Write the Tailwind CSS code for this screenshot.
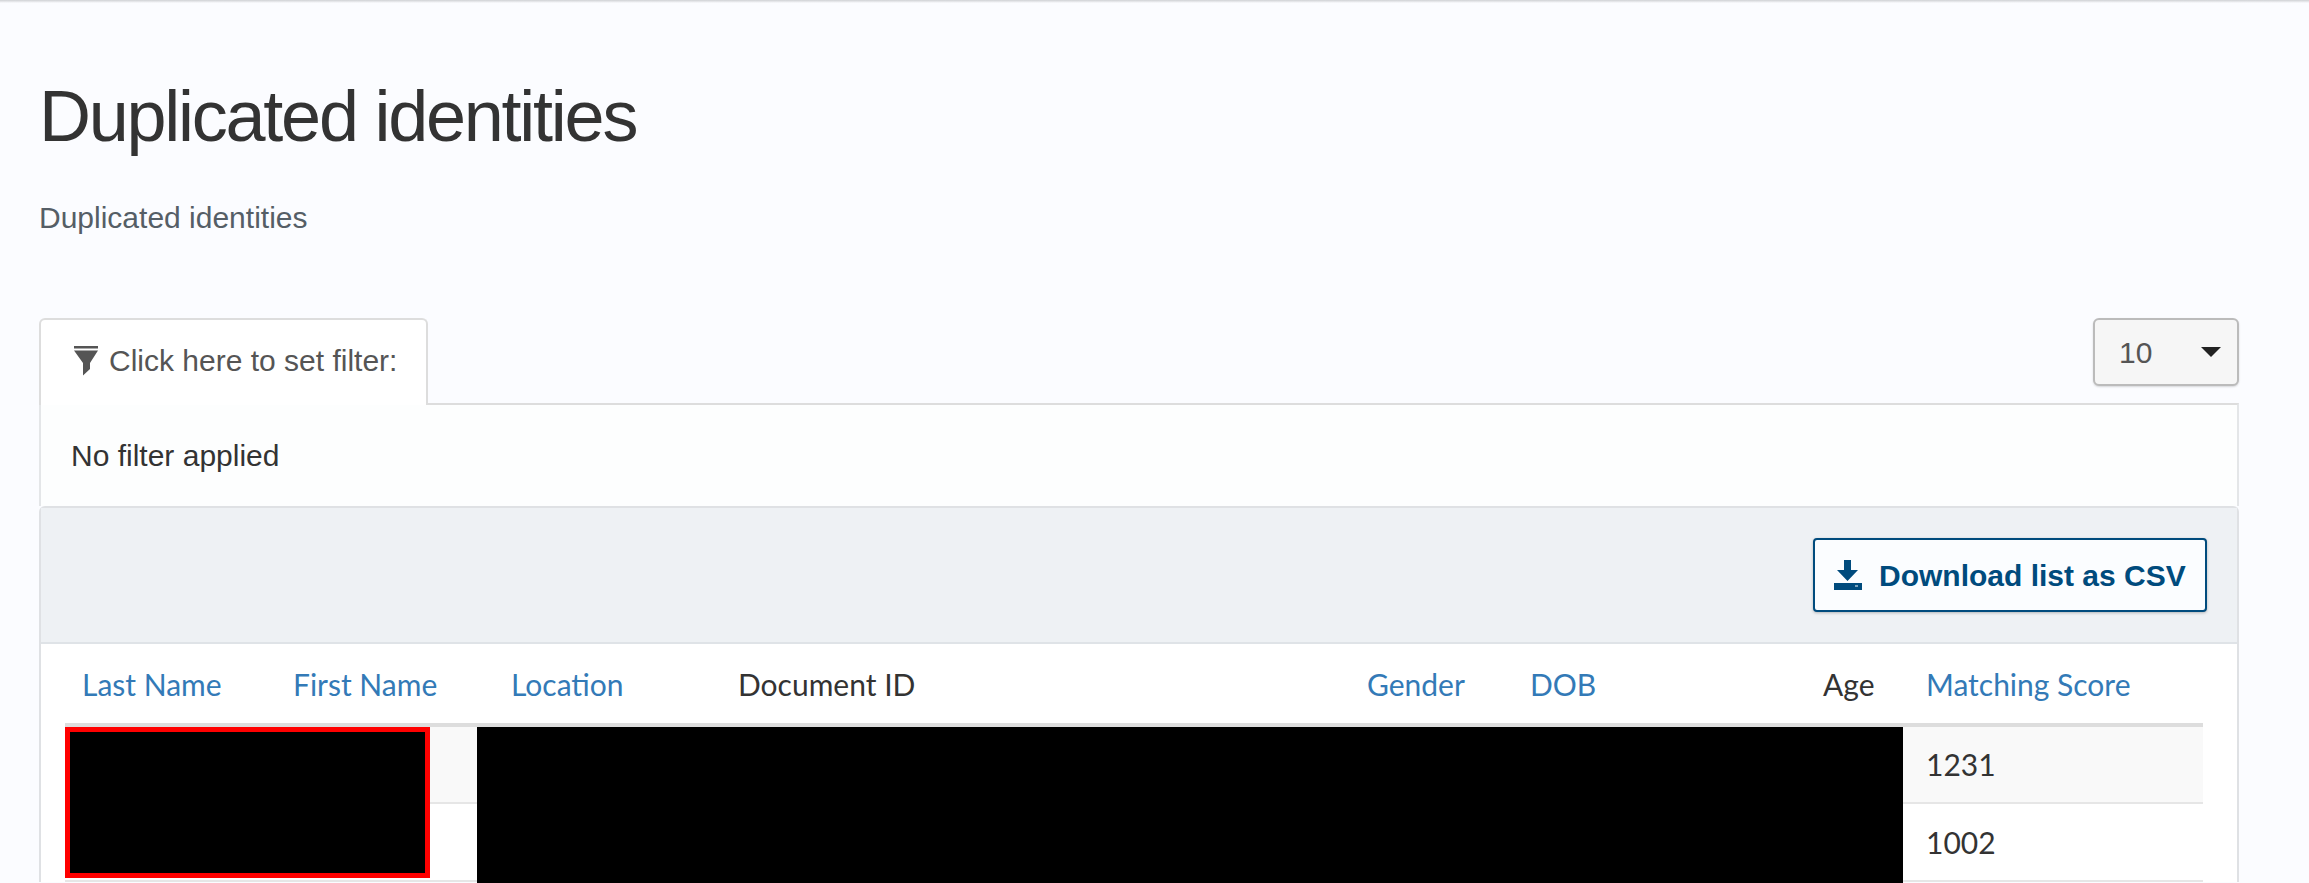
<!DOCTYPE html>
<html lang="en">
<head>
  <meta charset="UTF-8" />
  <title>Duplicated identities</title>
  <script src="https://cdn.jsdelivr.net/npm/@tailwindcss/browser@4"></script>
</head>
<body class="h-[883px] overflow-hidden bg-[#fbfcff] font-['Liberation_Sans',sans-serif] text-[30px] text-[#333]">
  <div class="h-[3px] bg-gradient-to-b from-[#cfd1d4] to-[#fbfcff]"></div>

  <main class="pl-[39px] pr-[70px]">
    <h1 class="mt-[69px] text-[72px] leading-[88px] tracking-[-2.25px] text-[#333]">Duplicated identities</h1>
    <p class="mt-[40px] text-[30px] leading-[36px] text-[#555e66]">Duplicated identities</p>

    <div class="mt-[82px] flex items-start justify-between">
      <button class="relative z-10 -mb-[2px] flex h-[87px] w-[389px] items-center rounded-t-md border-2 border-b-0 border-[#ddd] bg-white pb-[4px] pl-[33px] text-[#555]">
        <svg class="mr-[11px] h-[30px] w-[24px]" viewBox="0 0 24 30" fill="#555">
          <rect x="0" y="0" width="24" height="2.500" />
          <path d="M0 4.500h24L16 17v6l-7 6.500V17z" />
        </svg>
        <span>Click here to set filter:</span>
      </button>
      <div class="relative h-[68px] w-[146px] rounded-md border-2 border-[#bbb] bg-[#f6f6f6] pl-[24px] leading-[66px] text-[#555] shadow-[0_1px_2px_rgba(0,0,0,0.15)]">
        10
        <span class="absolute right-[16px] top-[27px] h-0 w-0 border-x-[10px] border-t-[10px] border-x-transparent border-t-[#222]"></span>
      </div>
    </div>

    <div class="h-[103px] border-x-2 border-t-2 border-x-[#e4e6e8] border-t-[#ddd] bg-[#fdfefe] pl-[30px] pt-[33px] leading-[36px]">No filter applied</div>

    <section class="rounded-t-md border-x-2 border-t-2 border-[#dfe1e4] bg-white">
      <div class="flex h-[136px] items-center justify-end border-b-2 border-[#dfe3e7] bg-[#eef1f4] pr-[30px]">
        <button class="flex h-[74px] w-[394px] items-center gap-[17px] rounded-[4px] border-2 border-[#004b7d] bg-[#fbfdff] pl-[19px] font-bold text-[#004b7d] shadow-[0_1px_3px_rgba(0,0,0,0.25)]">
          <svg class="h-[30px] w-[28px]" viewBox="0 0 28 30" fill="#004b7d">
            <path d="M10 0h7v10h7l-10.500 11L3 10h7z" />
            <path fill-rule="evenodd" d="M0 23h28v7H0zM21 25.500v1h3v-1z" />
          </svg>
          <span>Download list as CSV</span>
        </button>
      </div>

      <div class="relative pl-[24px] pr-[34px] font-['Lato',sans-serif]">
        <table class="w-full table-fixed border-collapse">
          <colgroup>
            <col class="w-[210px]" />
            <col class="w-[218px]" />
            <col class="w-[227px]" />
            <col class="w-[629px]" />
            <col class="w-[163px]" />
            <col class="w-[293px]" />
            <col class="w-[98px]" />
            <col />
          </colgroup>
          <thead>
            <tr class="h-[81px] border-b-4 border-[#ddd] text-left text-[#337ab7]">
              <th class="pl-[17px] pt-[2px] font-normal">Last Name</th>
              <th class="pl-[18px] pt-[2px] font-normal">First Name</th>
              <th class="pl-[18px] pt-[2px] font-normal">Location</th>
              <th class="pl-[18px] pt-[2px] font-normal text-[#333]">Document ID</th>
              <th class="pl-[18px] pt-[2px] font-normal">Gender</th>
              <th class="pl-[18px] pt-[2px] font-normal">DOB</th>
              <th class="pl-[18px] pt-[2px] font-normal text-[#333]">Age</th>
              <th class="pl-[23px] pt-[2px] font-normal whitespace-nowrap">Matching Score</th>
            </tr>
          </thead>
          <tbody>
            <tr class="h-[78px] border-b-2 border-[#e6e6e6] bg-[#f9f9f9]">
              <td colspan="7"></td>
              <td class="pl-[23px]">1231</td>
            </tr>
            <tr class="h-[78px] border-b-2 border-[#e6e6e6] bg-white">
              <td colspan="7"></td>
              <td class="pl-[23px]">1002</td>
            </tr>
          </tbody>
        </table>
        <!-- redaction blocks over the rows -->
        <div class="absolute left-[24px] top-[83px] h-[151px] w-[365px] border-[5px] border-[#f00] bg-black"></div>
        <div class="absolute left-[436px] top-[83px] h-[156px] w-[1426px] bg-black"></div>
      </div>
    </section>
  </main>
</body>
</html>
